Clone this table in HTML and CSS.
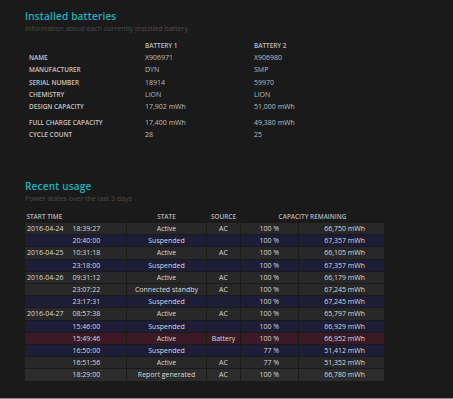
FILE: index.html
```
<!DOCTYPE html>
<html lang="en">
<head>
  <meta charset="UTF-8" />
  <title>Battery report</title>
  <link rel="stylesheet" href="styles.css">
</head>
<body>
  <div class="page">

    <!-- installed batteries -->
    <h2 class="section-title">Installed batteries</h2>
    <div class="section-sub">Information about each currently installed battery</div>
    <table class="batteries">
      <tr class="head"><td class="label"></td><td>BATTERY 1</td><td>BATTERY 2</td></tr>
      <tr><td class="label">Name</td><td>X906971</td><td>X906980</td></tr>
      <tr><td class="label">Manufacturer</td><td>DYN</td><td>SMP</td></tr>
      <tr><td class="label">Serial number</td><td>18914</td><td>59970</td></tr>
      <tr><td class="label">Chemistry</td><td>LION</td><td>LION</td></tr>
      <tr><td class="label">Design capacity</td><td>17,902 mWh</td><td>51,000 mWh</td></tr>
      <tr class="spaced"><td class="label">Full charge capacity</td><td>17,400 mWh</td><td>49,380 mWh</td></tr>
      <tr><td class="label">Cycle count</td><td>28</td><td>25</td></tr>
    </table>

    <!-- recent usage -->
    <h2 class="section-title recent">Recent usage</h2>
    <div class="section-sub">Power states over the last 3 days</div>
    <table class="usage">
      <colgroup>
        <col class="c-time"><col class="c-state"><col class="c-src"><col class="c-pct"><col class="c-mwh">
      </colgroup>
      <tr class="head">
        <th class="left">Start time</th><th>State</th><th>Source</th><th colspan="2">Capacity remaining</th>
      </tr>
      <tr class="ac"><td class="dt"><span class="date">2016-04-24</span>18:39:27</td><td class="st">Active</td><td class="st">AC</td><td class="pct">100 %</td><td class="mwh">66,750 mWh</td></tr>
      <tr class="susp"><td class="dt"><span class="date"></span>20:40:00</td><td class="st">Suspended</td><td></td><td class="pct">100 %</td><td class="mwh">67,357 mWh</td></tr>
      <tr class="ac"><td class="dt"><span class="date">2016-04-25</span>10:31:18</td><td class="st">Active</td><td class="st">AC</td><td class="pct">100 %</td><td class="mwh">66,105 mWh</td></tr>
      <tr class="susp"><td class="dt"><span class="date"></span>23:18:00</td><td class="st">Suspended</td><td></td><td class="pct">100 %</td><td class="mwh">67,357 mWh</td></tr>
      <tr class="ac"><td class="dt"><span class="date">2016-04-26</span>09:31:12</td><td class="st">Active</td><td class="st">AC</td><td class="pct">100 %</td><td class="mwh">66,179 mWh</td></tr>
      <tr class="ac"><td class="dt"><span class="date"></span>23:07:22</td><td class="st">Connected standby</td><td class="st">AC</td><td class="pct">100 %</td><td class="mwh">67,245 mWh</td></tr>
      <tr class="susp"><td class="dt"><span class="date"></span>23:17:31</td><td class="st">Suspended</td><td></td><td class="pct">100 %</td><td class="mwh">67,245 mWh</td></tr>
      <tr class="ac"><td class="dt"><span class="date">2016-04-27</span>08:57:38</td><td class="st">Active</td><td class="st">AC</td><td class="pct">100 %</td><td class="mwh">65,797 mWh</td></tr>
      <tr class="susp"><td class="dt"><span class="date"></span>15:46:00</td><td class="st">Suspended</td><td></td><td class="pct">100 %</td><td class="mwh">66,929 mWh</td></tr>
      <tr class="batt"><td class="dt"><span class="date"></span>15:49:46</td><td class="st">Active</td><td class="st">Battery</td><td class="pct">100 %</td><td class="mwh">66,952 mWh</td></tr>
      <tr class="susp"><td class="dt"><span class="date"></span>16:50:00</td><td class="st">Suspended</td><td></td><td class="pct">77 %</td><td class="mwh">51,412 mWh</td></tr>
      <tr class="ac"><td class="dt"><span class="date"></span>16:51:56</td><td class="st">Active</td><td class="st">AC</td><td class="pct">77 %</td><td class="mwh">51,352 mWh</td></tr>
      <tr class="report"><td class="dt"><span class="date"></span>18:29:00</td><td class="st">Report generated</td><td class="st">AC</td><td class="pct">100 %</td><td class="mwh">66,780 mWh</td></tr>
    </table>

  </div>
</body>
</html>
```

FILE: styles.css
```
* { margin: 0; padding: 0; box-sizing: border-box; }
body {
  background-color: #1a1a1a;
  font-family: "Open Sans", "Noto Sans", sans-serif;
  color: #d6d6d6;
}
.page {
  height: 399px;
  padding: 9.5px 0 0 25px;
  border-bottom: 1px solid #8a8a8a;
  overflow: hidden;
}

.section-title {
  font-size: 10px;
  line-height: 12px;
  font-weight: 600;
  color: #1cb3be;
  letter-spacing: 0.02em;
}
.section-title.recent { margin-top: 38px; }
.section-sub {
  margin-top: 2.6px;
  font-size: 7px;
  line-height: 9px;
  color: #4c4c4c;
}

/* installed batteries */
.batteries {
  margin-top: 7.4px;
  border-collapse: collapse;
  font-size: 7px;
  color: #bdbdbd;
}
.batteries td {
  height: 12.2px;
  line-height: 12.2px;
  padding: 0 0 0 4px;
  white-space: nowrap;
}
.batteries td:nth-child(2) { width: 109px; }
.batteries .head td {
  height: 11.7px;
  line-height: 11.7px;
  font-size: 6.4px;
  font-weight: 600;
}
.batteries .label {
  width: 116px;
  font-size: 6.4px;
  font-weight: 600;
  text-transform: uppercase;
  color: #c4c4c4;
}
.batteries .spaced td { padding-top: 4px; height: 16.2px; }

/* recent usage */
.usage {
  margin-top: 6.8px;
  margin-left: -1px;
  table-layout: fixed;
  width: 361px;
  border-collapse: separate;
  border-spacing: 1px;
  font-size: 7px;
}
.c-time { width: 101px; }
.c-state { width: 79px; }
.c-src { width: 33px; }
.c-pct { width: 57px; }
.c-mwh { width: 85px; }
.usage th {
  height: 11px;
  line-height: 11px;
  font-size: 6.4px;
  font-weight: 600;
  text-transform: uppercase;
  color: #b4b4b4;
  text-align: center;
  white-space: nowrap;
}
.usage th.left { text-align: left; padding-left: 1.5px; }
.usage td {
  height: 11.2px;
  line-height: 11.2px;
  white-space: nowrap;
  color: #d8d8d8;
}
.usage .dt { padding-left: 2px; }
.usage .date { display: inline-block; width: 45.5px; }
.usage .st { text-align: center; }
.usage .pct, .usage .mwh { text-align: right; padding-right: 19px; }

.usage .ac td { background-color: #282828; }
.usage .susp td { background-color: #1d1d37; }
.usage .batt td { background-color: #3b1a26; }
.usage .report td { background-color: #2c2c2c; }
```
